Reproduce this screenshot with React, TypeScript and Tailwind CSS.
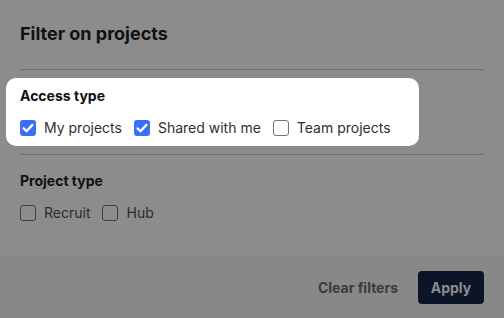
type Opt = { label: string; checked?: boolean };

function Box({ checked, dim }: { checked?: boolean; dim?: boolean }) {
  if (checked) {
    return (
      <span className="flex h-4 w-4 shrink-0 items-center justify-center rounded-[3px] bg-[#3b6ff5]">
        <svg viewBox="0 0 16 16" className="h-4 w-4" fill="none">
          <path d="M3.6 8.4l2.9 2.9 5.9-6.4" stroke="#fff" strokeWidth="2.3" strokeLinecap="round" strokeLinejoin="round" />
        </svg>
      </span>
    );
  }
  return (
    <span
      className={`h-4 w-4 shrink-0 rounded-[3px] border ${dim ? 'border-[#3f3f3f]' : 'border-[#767676] bg-white'}`}
    />
  );
}

function Group({ title, options, dim }: { title: string; options: Opt[]; dim?: boolean }) {
  return (
    <div>
      <h3 className="text-[14px] leading-5 font-bold text-[#111111]">{title}</h3>
      <div className="mt-3 flex items-center gap-3">
        {options.map((o) => (
          <label key={o.label} className="flex h-5 items-center gap-2">
            <Box checked={o.checked} dim={dim} />
            <span className={`text-[14px] leading-5 ${dim ? 'text-[#2b2b2b]' : 'text-[#2f2f2f]'}`}>{o.label}</span>
          </label>
        ))}
      </div>
    </div>
  );
}

export default function App() {
  return (
    <div
      className="flex h-[318px] w-[504px] flex-col overflow-hidden bg-[#8c8c8c]"
      style={{ fontFamily: 'Inter, "Noto Sans", sans-serif' }}
    >
      <div className="flex-1 px-5">
        {/* Header */}
        <div className="flex h-[70px] items-center border-b border-[#6f6f6f] pb-[1px]">
          <h2 className="text-[18px] leading-6 font-bold text-[#111111]">Filter on projects</h2>
        </div>

        {/* Highlighted section */}
        <div className="-mx-[14px] mt-2 w-fit rounded-[10px] bg-white py-2 pl-[14px] pr-[28px]">
          <Group
            title="Access type"
            options={[
              { label: 'My projects', checked: true },
              { label: 'Shared with me', checked: true },
              { label: 'Team projects' },
            ]}
          />
        </div>

        <div className="mt-2 border-t border-[#6f6f6f] pt-4">
          <Group title="Project type" dim options={[{ label: 'Recruit' }, { label: 'Hub' }]} />
        </div>
      </div>

      {/* Footer */}
      <div className="flex h-[63px] items-start justify-end gap-2 bg-[#888888] px-5 pt-4">
        <button className="h-[33px] px-3 text-[14px] font-bold text-[#3b3b3b]">Clear filters</button>
        <button className="h-[33px] w-[66px] rounded-[4px] bg-[#0c1428] text-[14px] font-bold text-[#8c8c8c]">
          Apply
        </button>
      </div>
    </div>
  );
}
